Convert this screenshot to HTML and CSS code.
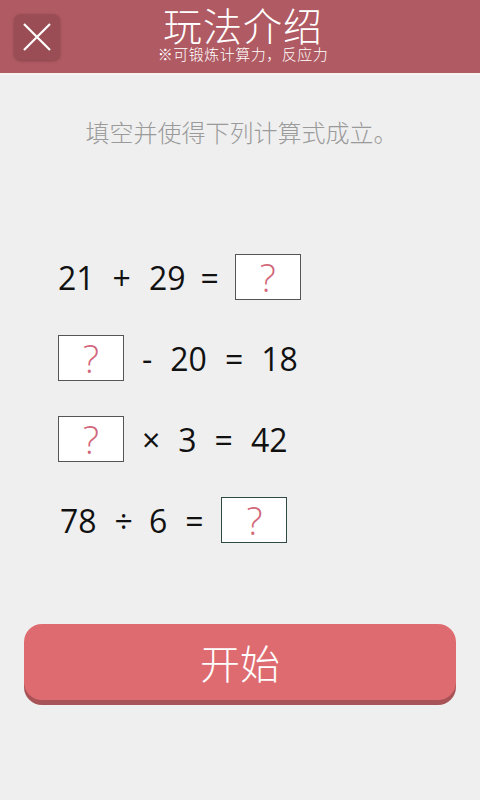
FILE: index.html
```html
<!DOCTYPE html>
<html lang="zh-CN">
<head>
	<meta charset="UTF-8">
	<title>玩法介绍</title>
	<link rel="stylesheet" href="styles.css">
</head>
<body>
	<div class="header">
		<div class="close">
			<svg width="30" height="30" viewBox="0 0 30 30"><path d="M2 2L28 28M28 2L2 28" stroke="#fff" stroke-width="2.2" fill="none"/></svg>
		</div>
		<div class="title">
			<h1>玩法介绍</h1>
			<p>※可锻炼计算力，反应力</p>
		</div>
	</div>
	<div class="main">
		<p class="tip">填空并使得下列计算式成立。</p>
		<ul class="list">
			<li class="row1"><span>21</span><span>+</span><span>29</span><span>=</span><b>?</b></li>
			<li class="row2"><b>?</b><span>-</span><span>20</span><span>=</span><span>18</span></li>
			<li class="row3"><b>?</b><span>×</span><span>3</span><span>=</span><span>42</span></li>
			<li class="row4"><span>78</span><span>÷</span><span>6</span><span>=</span><b>?</b></li>
		</ul>
		<div class="btn">开始</div>
	</div>
</body>
</html>
```
FILE: styles.css
```css
*{
	margin: 0;
	padding: 0;
	list-style: none;
}
body{
	width: 480px;
	height: 800px;
	background: #efefef;
	font-family: "Open Sans", "Noto Sans CJK SC", sans-serif;
	overflow: hidden;
}
.header{
	height: 73px;
	background: #b05a63;
	border-bottom: 2px solid #f6f2f0;
	position: relative;
}
.close{
	position: absolute;
	left: 14px;
	top: 14px;
	width: 46px;
	height: 46px;
	border-radius: 7px;
	background: #9a4d55;
	box-shadow: 0 1px 3px rgba(0,0,0,.25);
	display: flex;
	align-items: center;
	justify-content: center;
}
.title{
	text-align: center;
	color: #fff;
	padding-left: 6px;
	padding-top: 4px;
}
.title h1{
	font-family: "Noto Sans CJK SC", sans-serif;
	font-weight: 300;
	font-size: 39px;
	line-height: 40px;
	letter-spacing: 1px;
}
.title p{
	font-family: "Noto Sans CJK SC", sans-serif;
	font-weight: 300;
	font-size: 15px;
	line-height: 16px;
	margin-top: 2px;
	letter-spacing: 0.5px;
}
.main{
	display: flex;
	flex-direction: column;
}
.tip{
	font-family: "Noto Sans CJK SC", sans-serif;
	font-weight: 300;
	color: #9a9a9a;
	font-size: 24px;
	text-align: center;
	margin-top: 41px;
	line-height: 32px;
	padding-left: 3px;
}
.list{
	margin-top: 106px;
	padding-left: 58px;
	display: flex;
	flex-direction: column;
	gap: 35px;
}
.list li{
	display: flex;
	align-items: center;
	gap: 18px;
	height: 46px;
	font-size: 32px;
	color: #111;
}
.list li b{
	width: 64px;
	height: 44px;
	background: #fff;
	border: 1px solid #555;
	color: #d2677a;
	font-weight: 300;
	font-size: 38px;
	line-height: 44px;
	text-align: center;
}
.list .row1 span:nth-child(4){
	margin-left: -3px;
}
.list .row1 b{
	margin-left: -2px;
}
.list .row4{
	padding-left: 2px;
}
.list .row4 span:nth-child(3){
	margin-left: -2px;
}
.list .row4 b{
	border-color: #2f4a44;
}
.btn{
	margin: 81px 24px 0;
	height: 76px;
	border-radius: 18px;
	background: #de6b70;
	box-shadow: 0 5px 0 #a85358;
	color: #fff;
	font-family: "Noto Sans CJK SC", sans-serif;
	font-weight: 300;
	font-size: 40px;
	line-height: 76px;
	text-align: center;
}
```
